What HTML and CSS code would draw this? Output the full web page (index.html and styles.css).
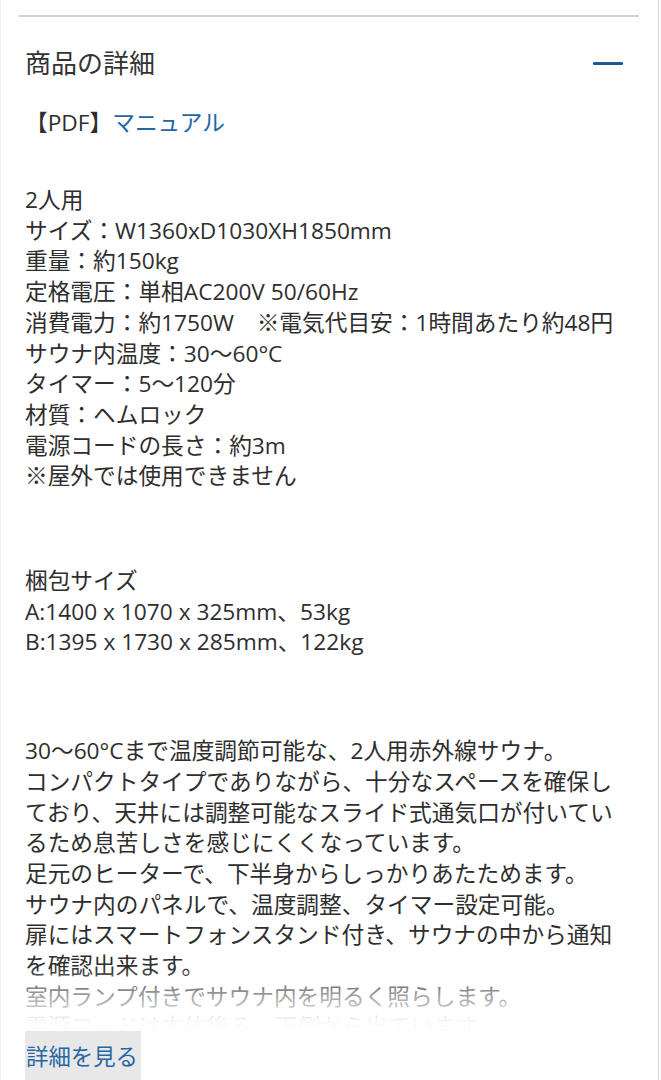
FILE: index.html
```html
<!DOCTYPE html>
<html lang="ja">
<head>
<meta charset="utf-8">
<title>商品の詳細</title>
<link rel="stylesheet" href="styles.css">
</head>
<body>
<div class="page">
  <div class="rule"></div>
  <section class="section">
    <div class="head">
      <h2 class="title">商品の詳細</h2>
      <span class="minus" aria-label="閉じる"></span>
    </div>
    <p class="pdf">【PDF】<a class="link" href="#">マニュアル</a></p>
    <div class="text">
      <p class="para">2人用<br>サイズ：W1360xD1030XH1850mm<br>重量：約150kg<br>定格電圧：単相AC200V 50/60Hz<br>消費電力：約1750W　※電気代目安：1時間あたり約48円<br>サウナ内温度：30〜60°C<br>タイマー：5〜120分<br>材質：ヘムロック<br>電源コードの長さ：約3m<br>※屋外では使用できません</p>
      <p class="para p2">梱包サイズ<br>A:1400 x 1070 x 325mm、53kg<br>B:1395 x 1730 x 285mm、122kg</p>
      <p class="para p3">30〜60°Cまで温度調節可能な、2人用赤外線サウナ。<br>コンパクトタイプでありながら、十分なスペースを確保しており、天井には調整可能なスライド式通気口が付いているため息苦しさを感じにくくなっています。<br>足元のヒーターで、下半身からしっかりあたためます。<br>サウナ内のパネルで、温度調整、タイマー設定可能。<br>扉にはスマートフォンスタンド付き、サウナの中から通知を確認出来ます。<br>室内ランプ付きでサウナ内を明るく照らします。<br>電源コードは本体後ろ、下側から出ています。</p>
      <div class="fade"></div>
    </div>
    <button class="more" type="button">詳細を見る</button>
  </section>
</div>
</body>
</html>
```
FILE: styles.css
```css
html, body {
  margin: 0;
  padding: 0;
  background: #fff;
}
body {
  font-family: "Open Sans", "Noto Sans CJK JP", sans-serif;
  color: #2e2e2e;
}
.page {
  width: 659px;
  min-height: 1080px;
  border-right: 1px solid #d6d6d6;
  border-left: 1px solid #f2f2f2;
  box-sizing: border-box;
  overflow: hidden;
}
.rule {
  margin: 15px 19px 0 18px;
  border-top: 2px solid #d2d2d2;
}
.section {
  padding: 0 32px 0 24px;
}
.head {
  display: flex;
  align-items: center;
  justify-content: space-between;
  margin-top: 30px;
}
.title {
  margin: 0;
  font-size: 26px;
  font-weight: 400;
  line-height: 32px;
  color: #333;
}
.minus {
  display: block;
  width: 30px;
  height: 3px;
  background: #1d5b98;
  margin-right: 3px;
  border-radius: 1px;
}
.pdf {
  margin: 28px 0 0;
  font-size: 22.7px;
  line-height: 32px;
}
.link {
  color: #2667a3;
  text-decoration: none;
}
.text {
  position: relative;
  margin-top: 46px;
  max-height: 846px;
  overflow: hidden;
  font-size: 22.7px;
  line-height: 30.7px;
}
.para {
  margin: 0;
}
.p2 {
  margin-top: 74px;
}
.p3 {
  margin-top: 78px;
}
.fade {
  position: absolute;
  left: 0;
  right: 0;
  bottom: 0;
  height: 64px;
  background: linear-gradient(to bottom, rgba(255,255,255,0), rgba(255,255,255,0.55) 45%, rgba(255,255,255,0.97) 85%, #fff);
}
.more {
  display: block;
  margin: 0;
  padding: 11px 3px 11px 1px;
  border: 0;
  background: #e8e8e8;
  color: #2667a3;
  font-family: "Open Sans", "Noto Sans CJK JP", sans-serif;
  font-size: 22.4px;
  line-height: 30px;
}
```
